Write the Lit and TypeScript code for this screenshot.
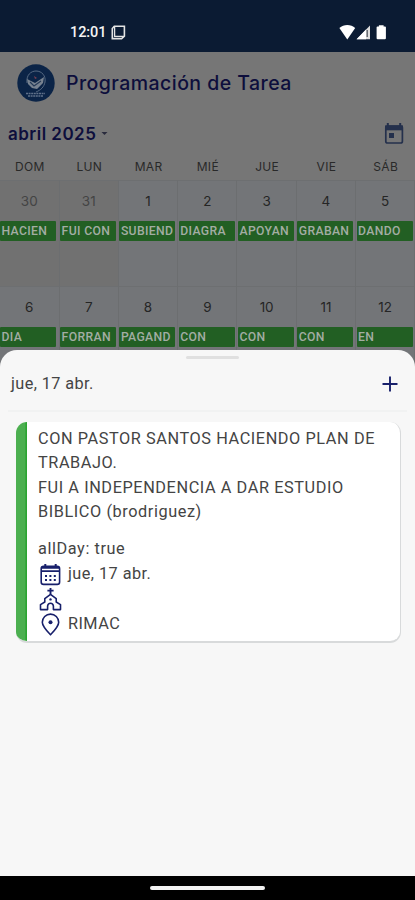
import { LitElement, html, svg, css } from "lit";
import { customElement } from "lit/decorators.js";

interface Day { n: number; label: string; out?: boolean }

const WEEKDAYS = ["DOM", "LUN", "MAR", "MIÉ", "JUE", "VIE", "SÁB"];
const WEEKS: Day[][] = [
  [
    { n: 30, label: "HACIEN", out: true }, { n: 31, label: "FUI CON", out: true },
    { n: 1, label: "SUBIEND" }, { n: 2, label: "DIAGRA" }, { n: 3, label: "APOYAN" },
    { n: 4, label: "GRABAN" }, { n: 5, label: "DANDO" },
  ],
  [
    { n: 6, label: "DIA" }, { n: 7, label: "FORRAN" }, { n: 8, label: "PAGAND" },
    { n: 9, label: "CON" }, { n: 10, label: "CON" }, { n: 11, label: "CON" }, { n: 12, label: "EN" },
  ],
];

@customElement("status-bar")
class StatusBar extends LitElement {
  static styles = css`
    :host { display: flex; height: 52px; box-sizing: border-box; padding: 24px 27px 0 70px; align-items: flex-start;
      background: #0b1b33; color: #f4f4f4; font: 500 14.5px/17px Roboto, sans-serif; }
    .time { width: 35px; letter-spacing: -0.1px; white-space: nowrap; }
    .note { margin: 1px auto 0 6px; }
    .signals { display: block; }
  `;
  render() {
    return html`
      <span class="time">12:01</span>
      <svg class="note" width="15" height="15" viewBox="0 0 15 15" fill="none" stroke="#e4e4e4" stroke-width="1.6">
        <path d="M3.3 1.3H13.4V11.2L10.6 13.6H1.3V3.6L3.3 1.3Z" />
        <path d="M3.6 1.6V11.4H13" stroke-width="1.3" />
      </svg>
      <svg class="signals" width="49" height="17" viewBox="0 0 49 17" fill="#fff">
        <path d="M0.4 4.1C4.6 0.1 12 0.1 16.2 4.1L8.3 15.4Z" />
        <path d="M17.6 15.2L31 1.4V15.2Z" fill="#dedede" />
        <path d="M17.6 15.2L27 5.4V15.2Z" />
        <path d="M28.2 6V13" stroke="#555a62" stroke-width="1.3" />
        <path d="M37.6 3.2Q37.6 2.4 38.5 2.4H39.9V1.2H44.6V2.4H46Q46.9 2.4 46.9 3.2V14.3Q46.9 15.3 45.9 15.3H38.6Q37.6 15.3 37.6 14.3Z" />
      </svg>
    `;
  }
}

@customElement("task-calendar")
class TaskCalendar extends LitElement {
  static styles = css`
    :host { display: block; height: 824px; background: #767676; color: #0d0e3c; font-family: Inter, sans-serif; overflow: hidden; }
    .head { display: flex; height: 61px; align-items: center; padding-left: 17px; gap: 11px; }
    .title { font-size: 19.5px; font-weight: 500; letter-spacing: 0.45px; white-space: nowrap; }
    .month { display: flex; height: 41px; align-items: center; padding: 0 10px 0 8px; }
    .name { font-size: 17px; font-weight: 600; letter-spacing: 0.48px; white-space: nowrap; }
    .caret { margin: 0 auto 0 5px; }
    .week { display: grid; grid-template-columns: 59.6px repeat(6, 59.3px); }
    .labels { height: 26px; line-height: 26px; font-size: 12px; letter-spacing: 0.3px; color: #292929; text-align: center; }
    .day { height: 105.5px; box-sizing: border-box; border-top: 1px solid #6d6f71; border-right: 1px solid #6c6e70;
      background: #737578; font-family: Roboto, sans-serif; }
    .out { background: #717171; }
    .num { height: 40px; line-height: 40px; font-family: Inter, sans-serif; font-size: 13.5px; text-align: center; color: #252525; }
    .out .num { color: #444; }
    .event { height: 20px; width: 56px; box-sizing: border-box; padding-left: 1.5px; background: #225f23; color: #a3ada3; border-radius: 1px;
      font-size: 12.2px; line-height: 21px; font-weight: 500; letter-spacing: 0.35px; white-space: nowrap; overflow: hidden; }
    .day + .day .event { margin-left: 0.5px; }
  `;
  render() {
    return html`
      <div class="head">
        <svg width="38" height="38" viewBox="0 0 38 38" fill="none">
          <circle cx="19" cy="19" r="18.7" fill="#0b2447" />
          <path d="M10 19C9 11 14 7 19 7C25 7 29 12 28 18C27 23 24 26 19 28" stroke="#566982" stroke-width="1" />
          <path d="M10 15L14 17L18 19L27 13L26 19L20 25L15 24L11 20Z" fill="#788391" />
          <path d="M13 18L17 22L24 17" stroke="#253a57" stroke-width="1.2" />
          <path d="M17 12L20 14L18 15Z" fill="#7c3f51" />
          <path d="M9 29.5H28M11 32H26" stroke="#60718a" stroke-width="1.5" stroke-dasharray="2 .6" />
        </svg>
        <div class="title">Programación de Tarea</div>
      </div>
      <div class="month">
        <div class="name">abril 2025</div>
        <svg class="caret" width="7" height="5"><path d="M.5 1H6.5L3.5 4Z" fill="#292b3d" /></svg>
        <svg width="22" height="24" viewBox="0 0 22 24">
          <path d="M4.8 1V4M17.2 1V4" stroke="#24304c" stroke-width="2" />
          <rect x="2.8" y="4" width="16.6" height="17" rx="1.8" fill="none" stroke="#24304c" stroke-width="1.7" />
          <path d="M2 3.4H20V8.3H2Z" fill="#24304c" />
          <rect x="6" y="11" width="5" height="5" fill="#24304c" />
        </svg>
      </div>
      <div class="week labels">${WEEKDAYS.map((d) => html`<span>${d}</span>`)}</div>
      ${WEEKS.map((w) => html`<div class="week">${w.map((d) => html`
        <div class="day ${d.out ? "out" : ""}">
          <div class="num">${d.n}</div>
          <div class="event">${d.label}</div>
        </div>`)}</div>`)}
    `;
  }
}

const calendarIcon = svg`
  <path d="M6.3 1V5M16.7 1V5" stroke-width="2" />
  <rect x="2.2" y="3.4" width="18.4" height="18" rx="2.4" />
  <path d="M2.2 4.8H20.6M2.2 8.2H20.6" stroke-width="1.7" />
  <path d="M6 13H8M10.4 13H12.4M14.8 13H16.8M6 17H8M10.4 17H12.4M14.8 17H16.8" stroke-width="1.9" />`;
const churchIcon = svg`
  <path d="M11.5 0V6.5M8.4 2.6H14.6" stroke-width="1.9" />
  <path d="M11.5 6.4L5.8 10.6V14L1.5 16.6V21.6H8.6V18Q8.9 15.2 11.5 15.2Q14.1 15.2 14.4 18V21.6H21.5V16.6L17.2 14V10.6Z" stroke-linejoin="round" />
  <circle cx="11.5" cy="11.4" r="1.2" fill="#18206b" stroke="none" />`;
const pinIcon = svg`
  <path d="M11.5 21.8C6.8 17 3.3 13.2 3.3 9.3A8.2 8.2 0 0 1 19.7 9.3C19.7 13.2 16.2 17 11.5 21.8Z" stroke-linejoin="round" />
  <circle cx="11.5" cy="9.3" r="2" fill="#18206b" stroke="none" />`;

@customElement("day-sheet")
class DaySheet extends LitElement {
  static styles = css`
    :host { display: block; background: #f7f7f7; border-radius: 17px 17px 0 0; overflow: hidden; color: #444;
      font: 400 16.3px/24.5px Roboto, sans-serif; letter-spacing: 0.58px; }
    .grip { width: 53px; height: 3px; margin: 5.5px auto 0; position: relative; left: 5px; background: #e0e0e0; border-radius: 2px; }
    .bar { display: flex; height: 51px; align-items: center; justify-content: space-between; padding: 0 17px 0 11px; }
    .bar span { letter-spacing: 0.4px; padding-top: 1px; }
    .bar svg { display: block; }
    .rule { height: 2px; margin: 0 8px; background: #f1f2f2; }
    .card { display: flex; height: 221px; box-sizing: border-box; margin: 10px 14px 0 16px; background: #fff; border-radius: 11px;
      overflow: hidden; border: solid #d8dadb; border-width: 0 1px 2px 0; }
    .stripe { width: 11px; flex: none; background: linear-gradient(90deg, #4caf50 80%, #2ba531 90%); }
    .body { padding: 5px 0 0 11px; white-space: nowrap; }
    .allday { margin-top: 12.5px; }
    .line { display: flex; align-items: center; gap: 6px; height: 25.2px; letter-spacing: 0.45px; }
    .line svg { margin-left: 1px; flex: none; }
  `;
  line(icon: unknown, text: string) {
    return html`<div class="line">
      <svg width="23" height="23" viewBox="0 0 23 23" fill="none" stroke="#18206b" stroke-width="1.6">${icon}</svg>
      <span>${text}</span>
    </div>`;
  }
  render() {
    return html`
      <div class="grip"></div>
      <div class="bar">
        <span>jue, 17 abr.</span>
        <svg width="16" height="16"><path d="M8 .5V15.5M.5 8H15.5" stroke="#18206b" stroke-width="1.9" /></svg>
      </div>
      <div class="rule"></div>
      <div class="card">
        <div class="stripe"></div>
        <div class="body">
          <div>CON PASTOR SANTOS HACIENDO PLAN DE<br />TRABAJO.<br />FUI A INDEPENDENCIA A DAR ESTUDIO<br />BIBLICO (brodriguez)</div>
          <div class="allday">allDay: true</div>
          ${this.line(calendarIcon, "jue, 17 abr.")}
          ${this.line(churchIcon, "")}
          ${this.line(pinIcon, "RIMAC")}
        </div>
      </div>
    `;
  }
}

@customElement("app-root")
class AppRoot extends LitElement {
  static styles = css`
    :host { display: block; position: relative; width: 415px; height: 900px; overflow: hidden; background: #000; }
    .sheet { position: absolute; left: 0; right: 0; top: 350px; height: 526px; }
    .nav { display: flex; height: 24px; align-items: center; justify-content: center; }
    .pill { width: 115px; height: 4px; border-radius: 2px; background: #f2f2f2; }
  `;
  render() {
    return html`
      <status-bar></status-bar>
      <task-calendar></task-calendar>
      <day-sheet class="sheet"></day-sheet>
      <div class="nav"><div class="pill"></div></div>
    `;
  }
}
